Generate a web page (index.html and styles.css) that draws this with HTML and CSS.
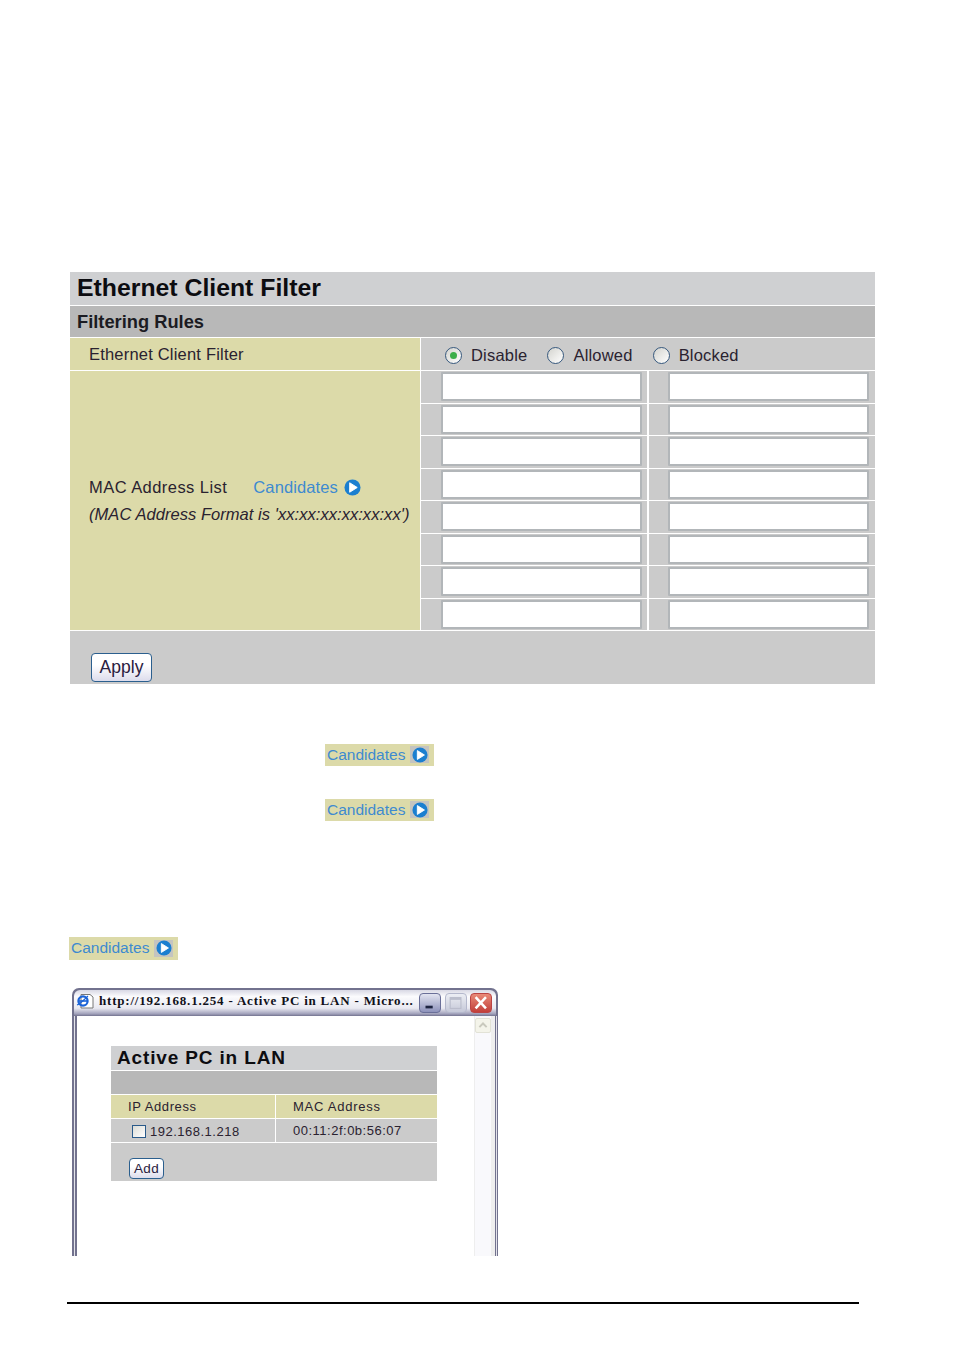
FILE: index.html
```html
<!DOCTYPE html>
<html lang="en">
<head>
<meta charset="utf-8">
<title>Ethernet Client Filter</title>
<link rel="stylesheet" href="styles.css">
</head>
<body>
<main class="page">
  <section class="panel">
    <h1 class="panel-title">Ethernet Client Filter</h1>
    <h2 class="panel-sub">Filtering Rules</h2>
    <div class="panel-grid">
      <div class="label label-top">Ethernet Client Filter</div>
      <div class="radios">
        <label class="radio"><span class="radio-dot radio-on"></span>Disable</label>
        <label class="radio"><span class="radio-dot"></span>Allowed</label>
        <label class="radio"><span class="radio-dot"></span>Blocked</label>
      </div>
      <div class="label label-mac">
        <div class="mac-line"><span class="mac-name">MAC Address List</span>
          <span class="cand cand-inline">Candidates<svg class="go" viewBox="0 0 18 18"><circle cx="9" cy="9" r="8.5" fill="#1b7fd0"/><path d="M6 4 14 9 6 14Z" fill="#fff" stroke="#fff" stroke-linejoin="round"/></svg></span>
        </div>
        <div class="mac-note">(MAC Address Format is 'xx:xx:xx:xx:xx:xx')</div>
      </div>
      <div class="inputs">
        <div class="cell"><input class="field" type="text"></div><div class="cell cell-r"><input class="field" type="text"></div>
        <div class="cell"><input class="field" type="text"></div><div class="cell cell-r"><input class="field" type="text"></div>
        <div class="cell"><input class="field" type="text"></div><div class="cell cell-r"><input class="field" type="text"></div>
        <div class="cell"><input class="field" type="text"></div><div class="cell cell-r"><input class="field" type="text"></div>
        <div class="cell"><input class="field" type="text"></div><div class="cell cell-r"><input class="field" type="text"></div>
        <div class="cell"><input class="field" type="text"></div><div class="cell cell-r"><input class="field" type="text"></div>
        <div class="cell"><input class="field" type="text"></div><div class="cell cell-r"><input class="field" type="text"></div>
        <div class="cell"><input class="field" type="text"></div><div class="cell cell-r"><input class="field" type="text"></div>
      </div>
    </div>
    <div class="panel-foot"><button class="btn btn-apply" type="button">Apply</button></div>
  </section>

  <div class="badge badge-a">Candidates<span class="go-box"><svg class="go go-s" viewBox="0 0 18 18"><circle cx="9" cy="9" r="8.5" fill="#1b7fd0"/><path d="M6 4 14 9 6 14Z" fill="#fff" stroke="#fff" stroke-linejoin="round"/></svg></span></div>
  <div class="badge badge-b">Candidates<span class="go-box"><svg class="go go-s" viewBox="0 0 18 18"><circle cx="9" cy="9" r="8.5" fill="#1b7fd0"/><path d="M6 4 14 9 6 14Z" fill="#fff" stroke="#fff" stroke-linejoin="round"/></svg></span></div>
  <div class="badge badge-c">Candidates<span class="go-box"><svg class="go go-s" viewBox="0 0 18 18"><circle cx="9" cy="9" r="8.5" fill="#1b7fd0"/><path d="M6 4 14 9 6 14Z" fill="#fff" stroke="#fff" stroke-linejoin="round"/></svg></span></div>

  <section class="window">
    <header class="titlebar">
      <svg class="ie" viewBox="0 0 18 16"><path d="M5 1.5H14L17 4V15H5Z" fill="#fff" stroke="#777"/><circle cx="7" cy="8" r="4.6" fill="none" stroke="#1a63d8" stroke-width="2.2"/><path d="M3 8H11" stroke="#1a63d8" stroke-width="1.6"/><path d="M1 12C4 11 9 6 12 3" stroke="#1a63d8" stroke-width="1.1" fill="none"/></svg>
      <span class="win-title">http://192.168.1.254 - Active PC in LAN - Micro...</span>
      <span class="winbtn winbtn-min"><svg viewBox="0 0 22 20"><rect x="6" y="13" width="8" height="3" fill="#1c2340"/></svg></span>
      <span class="winbtn winbtn-max"><svg viewBox="0 0 22 20"><rect x="4.5" y="4" width="12" height="12" fill="none" stroke="#b9bccb" stroke-width="1.2"/><path d="M4.5 5.5H16.5" stroke="#b9bccb" stroke-width="2"/></svg></span>
      <span class="winbtn winbtn-close"><svg viewBox="0 0 22 20"><path d="M5 3.5 16.5 16M16.5 3.5 5 16" stroke="#fff" stroke-width="2.8"/></svg></span>
    </header>
    <div class="win-body">
      <div class="win-content">
        <div class="lan">
          <h3 class="lan-title">Active PC in LAN</h3>
          <div class="lan-band"></div>
          <div class="lan-grid">
            <div class="lan-head lan-c1">IP Address</div>
            <div class="lan-head lan-c2">MAC Address</div>
            <div class="lan-cell lan-c1 lan-ip"><span class="check"></span>192.168.1.218</div>
            <div class="lan-cell lan-c2 lan-mac">00:11:2f:0b:56:07</div>
          </div>
          <div class="lan-foot"><button class="btn btn-add" type="button">Add</button></div>
        </div>
      </div>
      <div class="scrollbar"><span class="scroll-up"><svg viewBox="0 0 16 16"><path d="M3.5 10 8 5.5 12.5 10" fill="none" stroke="#c9c9bd" stroke-width="2.4"/></svg></span></div>
      <div class="scroll-edge"></div>
    </div>
  </section>

  <hr class="rule">
</main>
</body>
</html>
```
FILE: styles.css
```css
* { box-sizing: border-box; }
html, body { margin: 0; padding: 0; background: #fff; }
body { font-family: "Liberation Sans", Arial, sans-serif; color: #2a2230; }
.page { width: 954px; height: 1350px; padding-top: 272px; overflow: hidden; }

/* main panel */
.panel { width: 805px; margin-left: 70px; background: #fff; }
.panel-title { margin: 0; height: 33px; padding-left: 7px; background: #cfd0d2; color: #0c0c10; font-size: 24.8px; line-height: 32px; font-weight: 700; }
.panel-sub { margin: 1px 0 0; height: 31px; padding-left: 7px; background: #b8b8b8; color: #1b1b22; font-size: 18.3px; line-height: 32px; font-weight: 700; }
.panel-grid { display: grid; grid-template-columns: 350px 454px; gap: 1px; margin-top: 1px; background: #fff; }
.label { background: #dcdaa9; padding-left: 19px; font-size: 16.5px; letter-spacing: .2px; }
.label-top { height: 32px; line-height: 33px; }
.label-mac { display: flex; flex-direction: column; justify-content: center; }
.mac-line { display: flex; align-items: center; height: 26px; }
.mac-name { letter-spacing: .45px; }
.mac-note { height: 26px; line-height: 26px; font-style: italic; font-size: 16.5px; letter-spacing: .05px; white-space: nowrap; }
.cand-inline { display: inline-flex; align-items: center; margin-left: 26px; color: #3e8ad0; letter-spacing: .1px; }
.cand-inline .go { margin-left: 6px; }
.go { width: 17px; height: 17px; display: block; flex: none; }
.go-s { width: 16px; height: 16px; }

.radios { height: 32px; background: #cbcbcb; display: flex; align-items: center; padding-left: 24px; padding-top: 2px; font-size: 16.5px; letter-spacing: .2px; }
.radio { display: flex; align-items: center; margin-right: 20px; }
.radio-dot { width: 17px; height: 17px; margin-right: 9px; border-radius: 50%; border: 1.5px solid #37597e; background: linear-gradient(135deg, #d3d3ce, #fff); display: flex; align-items: center; justify-content: center; }
.radio-on::after { content: ""; width: 7px; height: 7px; border-radius: 50%; background: #3cae4a; }

.inputs { display: grid; grid-template-columns: 226px 226px; column-gap: 2px; row-gap: 1px; grid-auto-rows: 31.5px; background: #fff; }
.cell { background: #cbcbcb; padding-left: 19.5px; display: flex; align-items: center; }
.cell-r { padding-left: 19px; }
.field { width: 201px; height: 29px; padding: 0; background: #fff; border: 2px solid #b2b6b9; border-radius: 1px; }

.panel-foot { margin-top: 1px; height: 53px; padding: 22px 0 0 21px; background: #cbcbcb; }
.btn { display: block; padding: 0; border: 1.5px solid #2b5f8e; border-radius: 4px; background: linear-gradient(#fff 40%, #dcdcec); font-family: "Liberation Sans", Arial, sans-serif; color: #2a2040; text-align: center; }
.btn-apply { width: 61px; height: 29px; font-size: 17.5px; }

/* candidates badges */
.badge { display: flex; align-items: center; width: 109px; height: 22px; padding-left: 2px; padding-bottom: 1px; background: #dcdaa9; color: #3e8ad0; font-size: 15.5px; }
.go-box { display: flex; align-items: center; justify-content: center; width: 19px; height: 17px; margin-left: 5px; background: #c4c4c0; }
.badge-a { margin: 60px 0 0 325px; }
.badge-b { margin: 33px 0 0 325px; }
.badge-c { margin: 116px 0 0 69px; height: 23px; }

/* popup window */
.window { width: 426px; height: 268px; margin: 28px 0 0 72px; background: #72728e; border-radius: 7px 7px 0 0; display: flex; flex-direction: column; }
.titlebar { height: 26px; flex: none; margin: 2px 2px 0; padding: 0 4px 1px 2px; display: flex; align-items: center; border-radius: 6px 6px 0 0; background: linear-gradient(#d8d8e4, #fbfbfd 25%, #e9e9f1 70%, #a0a0ba 92%, #72728e); }
.ie { width: 18px; height: 16px; flex: none; margin-bottom: 3px; }
.win-title { flex: 1; margin-left: 5px; padding-bottom: 3px; font-family: "Liberation Serif", serif; font-weight: 700; font-size: 13px; letter-spacing: .8px; color: #10101a; white-space: nowrap; overflow: hidden; }
.winbtn { width: 22px; height: 20px; margin-left: 3px; border-radius: 4px; display: block; flex: none; }
.winbtn svg { display: block; width: 100%; height: 100%; }
.winbtn-min { margin-right: 1px; background: linear-gradient(#e2e4f0, #8d92bb); border: 1px solid #6a6f98; }
.winbtn-max { background: linear-gradient(#eceef4, #c5c8d8); border: 1px solid #b4b8cc; }
.winbtn-close { background: linear-gradient(#e98a78, #c23f3a); border: 1px solid #b44; }
.win-body { flex: 1; min-height: 0; display: flex; margin: 0 1px 0 2px; border-left: 1px solid #e3e3ea; border-right: 1px solid #e3e3ea; }
.win-content { flex: 1; padding: 30px 0 0 34px; background: #fff; border-left: 2px solid #72728e; }
.scrollbar { width: 17px; flex: none; background: #f9f9fc; border-left: 1px solid #eee; padding-top: 2px; }
.scroll-edge { width: 5px; flex: none; background: #eee; border-right: 1px solid #72728e; }
.scroll-up { display: block; width: 16px; height: 15px; background: #f4f4ea; border: 1px solid #e2e2d6; border-radius: 2px; }
.scroll-up svg { display: block; width: 100%; height: 100%; }

.lan { width: 326px; background: #fff; }
.lan-title { margin: 0; height: 24px; padding-left: 6px; background: #cfd0d2; color: #0c0c10; font-size: 19px; line-height: 24px; font-weight: 700; letter-spacing: .85px; }
.lan-band { height: 23px; margin-top: 1px; background: #b8b8b8; }
.lan-grid { display: grid; grid-template-columns: 164px 161px; gap: 1px; margin-top: 1px; }
.lan-head { height: 23px; line-height: 24px; background: #dcdaa9; font-size: 13px; letter-spacing: .6px; }
.lan-c2.lan-head { letter-spacing: .75px; }
.lan-cell { height: 23px; background: #cbcbcb; font-size: 13px; letter-spacing: .5px; }
.lan-c1 { padding-left: 17px; }
.lan-c2 { padding-left: 17px; }
.lan-ip { display: flex; align-items: center; padding-left: 21px; padding-top: 2px; }
.lan-mac { line-height: 23px; }
.check { width: 14px; height: 13px; margin-right: 4px; background: linear-gradient(135deg, #dcdcd6, #fff); border: 1px solid #2a5a8a; flex: none; }
.lan-foot { height: 38px; margin-top: 1px; padding: 15px 0 0 18px; background: #cbcbcb; }
.btn-add { width: 35px; height: 21px; font-size: 13.5px; letter-spacing: .3px; }

.rule { width: 792px; height: 2px; margin: 46px 0 0 67px; padding: 0; border: 0; background: #000; }
```
